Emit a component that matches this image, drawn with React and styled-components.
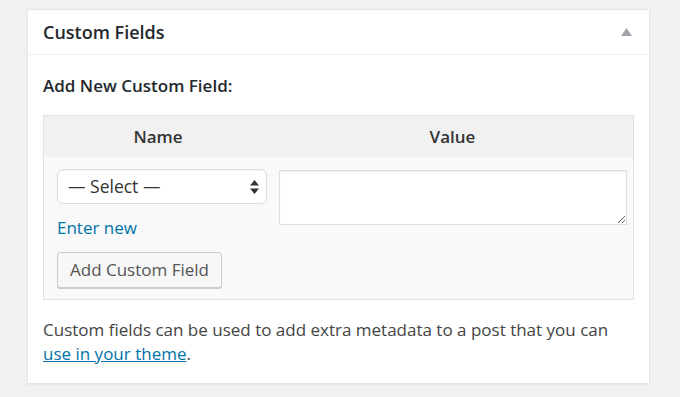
import React from "react";
import styled, { createGlobalStyle } from "styled-components";

const Global = createGlobalStyle`
  html, body { margin: 0; padding: 0; background: #f1f1f1; }
  body { font-family: "Open Sans", "Noto Sans", sans-serif; color: #444; -webkit-font-smoothing: antialiased; }
`;

const Page = styled.div`
  padding: 9px 0 0 27px;
  height: 397px;
  box-sizing: border-box;
`;

const Panel = styled.section`
  width: 623px;
  box-sizing: border-box;
  background: #fff;
  border: 1px solid #e5e5e5;
  box-shadow: 0 1px 1px rgba(0,0,0,0.04);
`;

const Header = styled.header`
  height: 45px;
  box-sizing: border-box;
  border-bottom: 1px solid #eee;
  display: flex;
  align-items: center;
  justify-content: space-between;
  padding: 0 17px 0 15px;
`;

const Title = styled.h2`
  margin: 0;
  font-size: 18px;
  font-weight: 600;
  color: #23282d;
`;

const Toggle = styled.svg`
  width: 11px;
  height: 8px;
  fill: #a0a5aa;
`;

const Body = styled.div`
  padding: 19px 15px 17px 15px;
`;

const Label = styled.p`
  margin: 0;
  font-size: 17px;
  line-height: 24px;
  font-weight: 600;
  color: #23282d;
`;

const Table = styled.div`
  margin-top: 17px;
  border: 1px solid #e1e1e1;
  background: #f9f9f9;
  display: grid;
  grid-template-columns: 228px 1fr;
`;

const HeadCell = styled.div`
  height: 41px;
  background: #f1f1f1;
  display: flex;
  align-items: center;
  justify-content: center;
  font-size: 17px;
  font-weight: 600;
  color: #333;
  padding-bottom: 1px;
  box-sizing: border-box;
`;

const Cell = styled.div`
  padding: ${p => p.$pad};
  display: flex;
  flex-direction: column;
  align-items: flex-start;
`;

const SelectWrap = styled.div`
  position: relative;
  width: 210px;
  height: 35px;
`;

const Select = styled.select`
  appearance: none;
  -webkit-appearance: none;
  width: 100%;
  height: 100%;
  box-sizing: border-box;
  border: 1px solid #ddd;
  border-radius: 6px;
  background: #fff;
  box-shadow: inset 0 1px 2px rgba(0,0,0,0.05);
  font-family: inherit;
  font-size: 17.5px;
  color: #333;
  padding: 0 10px 1px 10px;
  outline: none;
`;

const Arrows = styled.svg`
  position: absolute;
  right: 8px;
  top: 11px;
  width: 9px;
  height: 14px;
  fill: #333;
  pointer-events: none;
`;

const Link = styled.a`
  color: #0073aa;
  font-size: ${p => p.$size || "17px"};
  line-height: 24px;
  text-decoration: ${p => (p.$underline ? "underline" : "none")};
  margin-top: ${p => p.$mt || "0"};
`;

const Button = styled.button`
  margin-top: 12px;
  height: 36px;
  width: 165px;
  box-sizing: border-box;
  border: 1px solid #ccc;
  border-radius: 3px;
  background: #f7f7f7;
  box-shadow: 0 1px 0 #ccc;
  font-family: inherit;
  font-size: 17px;
  color: #555;
  padding: 0 0 2px 0;
`;

const TextArea = styled.textarea`
  width: 348px;
  height: 55px;
  box-sizing: border-box;
  border: 1px solid #ddd;
  background: #fff;
  box-shadow: inset 0 1px 2px rgba(0,0,0,0.07);
  resize: vertical;
  font-family: inherit;
  outline: none;
  display: block;
`;

const Note = styled.p`
  margin: 18px 0 0 0;
  font-size: 17px;
  line-height: 24px;
  color: #444;
`;

export default function App() {
  return (
    <>
      <Global />
      <Page>
        <Panel>
          <Header>
            <Title>Custom Fields</Title>
            <Toggle viewBox="0 0 11 8"><polygon points="5.5,0 11,8 0,8" /></Toggle>
          </Header>
          <Body>
            <Label>Add New Custom Field:</Label>
            <Table>
              <HeadCell>Name</HeadCell>
              <HeadCell>Value</HeadCell>
              <Cell $pad="12px 0 11px 13px">
                <SelectWrap>
                  <Select defaultValue="">
                    <option value="">— Select —</option>
                  </Select>
                  <Arrows viewBox="0 0 9 14">
                    <polygon points="4.5,0 9,5.5 0,5.5" />
                    <polygon points="0,8.5 9,8.5 4.5,14" />
                  </Arrows>
                </SelectWrap>
                <Link href="#" $mt="12px">Enter new</Link>
                <Button>Add Custom Field</Button>
              </Cell>
              <Cell $pad="13px 0 11px 7px">
                <TextArea />
              </Cell>
            </Table>
            <Note>
              Custom fields can be used to add extra metadata to a post that you can{" "}
              <Link href="#" $underline>use in your theme</Link>.
            </Note>
          </Body>
        </Panel>
      </Page>
    </>
  );
}
